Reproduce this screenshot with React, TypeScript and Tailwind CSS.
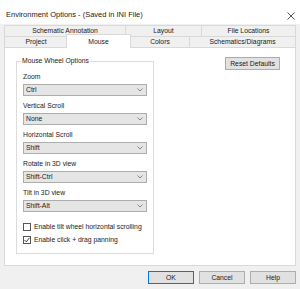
import React from "react";

const Combo = ({ value }: { value: string }) => (
  <div className="h-[12px] bg-[#e5e5e5] border border-[#adadad] flex items-center justify-between pl-[2px] pr-[3px]">
    <span className="leading-[10px]">{value}</span>
    <svg width="6" height="4" viewBox="0 0 6 4">
      <polyline points="0.5,0.5 3,3 5.5,0.5" fill="none" stroke="#707070" strokeWidth="0.8" />
    </svg>
  </div>
);

const Field = ({ label, value }: { label: string; value: string }) => (
  <div className="flex flex-col">
    <div className="h-[10px] leading-[10px] mb-[2px]">{label}</div>
    <Combo value={value} />
  </div>
);

const Check = ({ label, checked }: { label: string; checked?: boolean }) => (
  <div className="h-[13px] flex items-center gap-[3px]">
    <div className="w-[8px] h-[8px] border border-[#555] bg-white flex items-center justify-center">
      {checked && (
        <svg width="6" height="6" viewBox="0 0 6 6">
          <polyline points="0.5,3 2.3,4.8 5.5,0.8" fill="none" stroke="#222" strokeWidth="0.9" />
        </svg>
      )}
    </div>
    <span className="leading-[10px]">{label}</span>
  </div>
);

const Btn = ({ label, primary }: { label: string; primary?: boolean }) => (
  <div
    className={
      "w-[46px] h-[13px] bg-[#e1e1e1] border flex items-center justify-center leading-[10px] " +
      (primary ? "border-[#0078d7]" : "border-[#adadad]")
    }
  >
    {label}
  </div>
);

export default function App() {
  return (
    <div className="w-[300px] h-[289px] bg-[#f0f0f0] overflow-hidden font-['Liberation_Sans',Arial,sans-serif] text-[6.8px] text-[#1a1a1a]">
      {/* Title bar */}
      <div className="h-[24px] bg-white flex items-center justify-between pl-[6px] pr-[5px] pt-[6px]">
        <span className="text-[7.5px] leading-[10px]">Environment Options - (Saved in INI File)</span>
        <svg width="8" height="8" viewBox="0 0 8 8" className="mt-[2px]">
          <line x1="0.5" y1="0.5" x2="7.5" y2="7.5" stroke="#222" strokeWidth="0.8" />
          <line x1="7.5" y1="0.5" x2="0.5" y2="7.5" stroke="#222" strokeWidth="0.8" />
        </svg>
      </div>

      {/* Tabs + panel */}
      <div className="mx-[4px] mt-[1px]">
        <div className="flex h-[11px]">
          <div className="w-[121px] border-t border-l border-[#d9d9d9] flex items-center justify-center leading-[10px]">
            Schematic Annotation
          </div>
          <div className="w-[76px] border-t border-l border-[#d9d9d9] flex items-center justify-center leading-[10px]">
            Layout
          </div>
          <div className="flex-1 border-t border-l border-r border-[#d9d9d9] flex items-center justify-center leading-[10px]">
            File Locations
          </div>
        </div>
        <div className="flex h-[11px] items-end">
          <div className="w-[63px] h-[11px] border-t border-l border-[#d9d9d9] flex items-center justify-center leading-[10px]">
            Project
          </div>
          <div className="relative z-10 w-[65px] h-[14px] -mx-[1px] -mb-[1px] bg-white border-t border-l border-r border-[#d9d9d9] flex items-center justify-center leading-[10px]">
            Mouse
          </div>
          <div className="w-[59px] h-[11px] border-t border-l border-[#d9d9d9] flex items-center justify-center leading-[10px]">
            Colors
          </div>
          <div className="flex-1 h-[11px] border-t border-l border-r border-[#d9d9d9] flex items-center justify-center leading-[10px]">
            Schematics/Diagrams
          </div>
        </div>

        {/* Panel */}
        <div className="h-[219px] bg-white border border-[#d9d9d9] flex justify-between">
          <div className="ml-[11px] mt-[13px] w-[138px] h-[193px] relative border border-[#dcdcdc] pt-[10px] pl-[6px] pr-[6px]">
            <div className="absolute -top-[6px] left-[4px] bg-white px-[1px] leading-[10px]">
              Mouse Wheel Options
            </div>
            <div className="flex flex-col gap-[5px]">
              <Field label="Zoom" value="Ctrl" />
              <Field label="Vertical Scroll" value="None" />
              <Field label="Horizontal Scroll" value="Shift" />
              <Field label="Rotate in 3D view" value="Shift-Ctrl" />
              <Field label="Tilt in 3D view" value="Shift-Alt" />
            </div>
            <div className="mt-[8px] flex flex-col">
              <Check label="Enable tilt wheel horizontal scrolling" />
              <Check label="Enable click + drag panning" checked />
            </div>
          </div>
          <div className="mt-[9px] mr-[15px] w-[55px] h-[13px] bg-[#e1e1e1] border border-[#adadad] flex items-center justify-center leading-[10px]">
            Reset Defaults
          </div>
        </div>
      </div>

      {/* Bottom buttons */}
      <div className="mt-[5px] mr-[4px] flex justify-end gap-[5px]">
        <Btn label="OK" primary />
        <Btn label="Cancel" />
        <Btn label="Help" />
      </div>
    </div>
  );
}
